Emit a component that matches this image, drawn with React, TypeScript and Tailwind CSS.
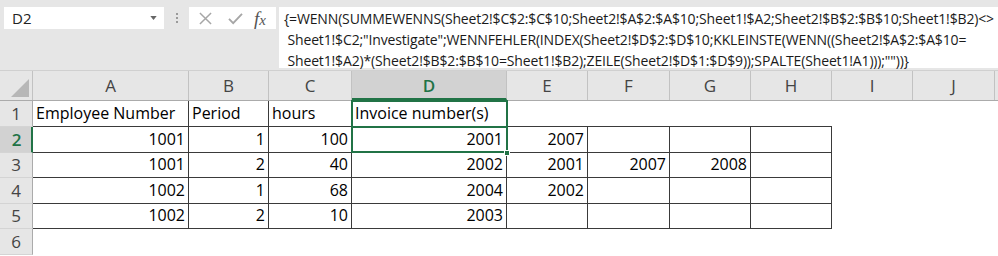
import React from "react"

const COLS = [
  { id: "A", w: "w-[156px]" },
  { id: "B", w: "w-[80px]" },
  { id: "C", w: "w-[83px]" },
  { id: "D", w: "w-[155px]" },
  { id: "E", w: "w-[81px]" },
  { id: "F", w: "w-[82px]" },
  { id: "G", w: "w-[81px]" },
  { id: "H", w: "w-[81px]" },
  { id: "I", w: "w-[81px]" },
  { id: "J", w: "w-[82px]" },
]

const ROW_H = ["h-[26px]", "h-[26px]", "h-[25px]", "h-[26px]", "h-[25px]", "h-[26px]"]

// row 1 is the header text, rows 2-5 hold numbers
const DATA: string[][] = [
  ["Employee Number", "Period", "hours", "Invoice number(s)", "", "", "", "", "", ""],
  ["1001", "1", "100", "2001", "2007", "", "", "", "", ""],
  ["1001", "2", "40", "2002", "2001", "2007", "2008", "", "", ""],
  ["1002", "1", "68", "2004", "2002", "", "", "", "", ""],
  ["1002", "2", "10", "2003", "", "", "", "", "", ""],
  ["", "", "", "", "", "", "", "", "", ""],
]

const FORMULA = [
  "{=WENN(SUMMEWENNS(Sheet2!$C$2:$C$10;Sheet2!$A$2:$A$10;Sheet1!$A2;Sheet2!$B$2:$B$10;Sheet1!$B2)<>",
  " Sheet1!$C2;\"Investigate\";WENNFEHLER(INDEX(Sheet2!$D$2:$D$10;KKLEINSTE(WENN((Sheet2!$A$2:$A$10=",
  " Sheet1!$A2)*(Sheet2!$B$2:$B$10=Sheet1!$B2);ZEILE(Sheet2!$D$1:$D$9));SPALTE(Sheet1!A1)));\"\"))}",
]

function FormulaBar(): JSX.Element {
  return (
    <div className="flex h-[70px] items-start bg-[#e6e6e6] pl-[4px] pt-[7px]">
      <div className="flex h-[22px] w-[160px] items-center justify-between bg-white pl-[8px] pr-[7px] text-[15px] text-[#222]">
        <span>D2</span>
        <svg viewBox="0 0 8 5" className="h-[4px] w-[7px]">
          <path d="M0 0 L8 0 L4 5 Z" fill="#666" />
        </svg>
      </div>
      <div className="flex h-[22px] w-[25px] flex-col items-center justify-center gap-[2px]">
        <span className="h-[2px] w-[2px] bg-[#9a9a9a]" />
        <span className="h-[2px] w-[2px] bg-[#9a9a9a]" />
        <span className="h-[2px] w-[2px] bg-[#9a9a9a]" />
      </div>
      <div className="flex h-[22px] w-[87px] items-center bg-white pl-[10px]">
        <svg viewBox="0 0 14 14" className="h-[13px] w-[13px]">
          <path d="M1 1 L13 13 M13 1 L1 13" stroke="#a6a6a6" strokeWidth="1.6" />
        </svg>
        <svg viewBox="0 0 16 14" className="ml-[16px] h-[13px] w-[15px]">
          <path d="M1 7.5 L5.5 12 L15 2" stroke="#a6a6a6" strokeWidth="2" fill="none" />
        </svg>
        <span className="ml-[11px] font-['Liberation_Serif',serif] text-[19px] italic leading-none text-[#555]">
          f<span className="text-[15px]">x</span>
        </span>
      </div>
      <div className="ml-[3px] flex h-[61px] flex-1 flex-col bg-white pl-[5px] pt-[1px] text-[14px] leading-[21px] tracking-[-0.15px] text-[#1a1a1a]">
        {FORMULA.map((line, i) => (
          <div key={i} className="whitespace-pre">
            {line}
          </div>
        ))}
      </div>
    </div>
  )
}

function ColumnHeaders(): JSX.Element {
  return (
    <div className="flex h-[31px] border-b border-t border-b-[#ababab] border-t-[#d0d0d0] bg-[#e6e6e6] text-[17px] text-[#444]">
      <div className="flex w-[33px] items-end justify-end border-r border-[#c2c2c2] pb-[3px] pr-[3px]">
        <svg viewBox="0 0 18 18" className="h-[18px] w-[18px]">
          <path d="M18 0 L18 18 L0 18 Z" fill="#b7b7b7" />
        </svg>
      </div>
      {COLS.map((c) =>
        c.id === "D" ? (
          <div
            key={c.id}
            className={`${c.w} flex items-center justify-center border-b-2 border-r border-b-[#217346] border-r-[#c2c2c2] bg-[#d2d2d2] pt-[2px] font-semibold text-[#217346]`}
          >
            {c.id}
          </div>
        ) : (
          <div key={c.id} className={`${c.w} flex items-center justify-center border-r border-[#c2c2c2] pt-[1px]`}>
            {c.id}
          </div>
        ),
      )}
      <div className="flex-1" />
    </div>
  )
}

function cellBorder(r: number, c: number): string {
  if (r === 0) {
    return c < 4 ? "border-r border-b border-[#3a3a3a]" : c < 8 ? "border-b border-[#3a3a3a]" : ""
  }
  if (r >= 1 && r <= 4 && c < 8) return "border-r border-b border-[#3a3a3a]"
  return ""
}

function Grid(): JSX.Element {
  return (
    <div className="relative">
      {DATA.map((row, r) => (
        <div key={r} className={`flex ${ROW_H[r]}`}>
          {r === 1 ? (
            <div className="flex w-[33px] items-center justify-center border-b border-r-2 border-b-[#d4d4d4] border-r-[#217346] bg-[#d2d2d2] pl-[2px] text-[17px] font-semibold text-[#217346]">
              {r + 1}
            </div>
          ) : (
            <div className="flex w-[33px] items-center justify-center border-b border-r border-b-[#d4d4d4] border-r-[#ababab] bg-[#e6e6e6] text-[17px] text-[#444]">
              {r + 1}
            </div>
          )}
          {COLS.map((col, c) => (
            <div
              key={col.id}
              className={`${col.w} ${cellBorder(r, c)} flex items-end overflow-visible whitespace-nowrap pb-[1px] text-[16px] text-black ${
                r === 0 ? "justify-start pl-[3px]" : "justify-end pr-[3px]"
              }`}
            >
              {row[c]}
            </div>
          ))}
          <div className="flex-1" />
        </div>
      ))}
      {/* selection outline on D1:D2 */}
      <div className="pointer-events-none absolute left-[351px] top-[-1px] h-[28px] w-[157px] border-2 border-[#217346]" />
      <div className="pointer-events-none absolute left-[351px] top-[25px] h-[27px] w-[157px] border-2 border-[#217346]" />
      <div className="pointer-events-none absolute left-[504px] top-[49px] h-[6px] w-[6px] border border-white bg-[#217346]" />
    </div>
  )
}

export default function App(): JSX.Element {
  return (
    <div className="h-[256px] w-[998px] overflow-hidden bg-white font-['Open_Sans',sans-serif]">
      <FormulaBar />
      <ColumnHeaders />
      <Grid />
    </div>
  )
}
